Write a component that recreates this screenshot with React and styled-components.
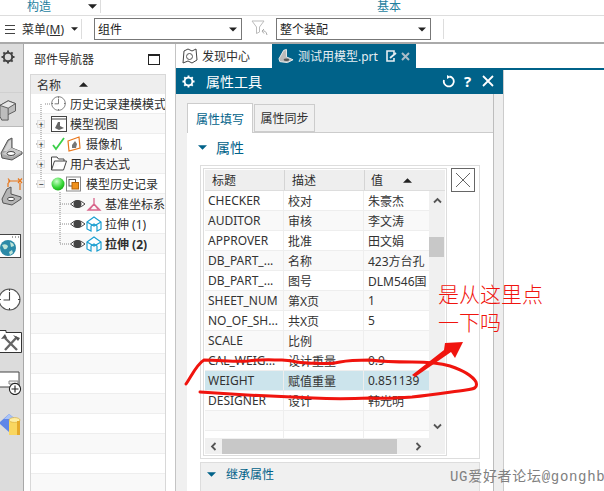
import styled, { createGlobalStyle } from 'styled-components';

const Global = createGlobalStyle`
  html, body { margin: 0; padding: 0; background: #fff; }
  * { box-sizing: border-box; }
`;

const treeRows = [
  { label: '历史记录建模模式', textX: 70 },
  { label: '模型视图', textX: 70, toggle: '+' },
  { label: '摄像机', textX: 86, toggle: '+' },
  { label: '用户表达式', textX: 70, toggle: '+' },
  { label: '模型历史记录', textX: 86, toggle: '−' },
  { label: '基准坐标系', textX: 105 },
  { label: '拉伸 (1)', textX: 105 },
  { label: '拉伸 (2)', textX: 105, bold: true },
];

const attrs = [
  ['CHECKER', '校对', '朱豪杰'],
  ['AUDITOR', '审核', '李文涛'],
  ['APPROVER', '批准', '田文娟'],
  ['DB_PART_...', '名称', '423方台孔'],
  ['DB_PART_...', '图号', 'DLM546国'],
  ['SHEET_NUM', '第X页', '1'],
  ['NO_OF_SH...', '共X页', '5'],
  ['SCALE', '比例', ''],
  ['CAL_WEIG...', '设计重量', '0.9'],
  ['WEIGHT', '赋值重量', '0.851139'],
  ['DESIGNER', '设计', '韩光明'],
  ['', '', ''],
  ['', '', ''],
];

const Caret = ({ up, color = '#222', w = 9, h = 5 }) => (
  <svg width={w} height={h} viewBox="0 0 10 5">
    <path d={up ? 'M0 5 L5 0 L10 5Z' : 'M0 0 L10 0 L5 5Z'} fill={color} />
  </svg>
);

const Chevron = ({ rotate = 0 }) => (
  <svg width="9" height="7" viewBox="0 0 9 7" style={{ transform: `rotate(${rotate}deg)` }}>
    <path d="M1 5.5 L4.5 2 L8 5.5" fill="none" stroke="#555" strokeWidth="1.8" />
  </svg>
);

const Gear = ({ color = '#444', size = 14 }) => (
  <svg width={size} height={size} viewBox="0 0 14 14">
    <circle cx="7" cy="7" r="4.2" fill="none" stroke={color} strokeWidth="2" />
    <path d="M7 0.5V3M7 11V13.5M0.5 7H3M11 7H13.5M2.4 2.4L4 4M10 10L11.6 11.6M2.4 11.6L4 10M10 4L11.6 2.4" stroke={color} strokeWidth="2" />
  </svg>
);

const Cube = () => (
  <svg width="22" height="26" viewBox="0 0 24 26">
    <path d="M1 8 L10 3 L18 6 L18 14 L10 18 L10 24 L3 24 L1 20Z" fill="#bdbdbd" stroke="#555" />
    <path d="M10 3 L18 6 L10 11 L1 8Z" fill="#e8e8e8" stroke="#555" />
    <path d="M10 11V18" stroke="#555" />
  </svg>
);

const Bracket = () => (
  <svg width="23" height="24" viewBox="0 0 23 24">
    <path d="M1 16 L8 3 L12 1 L12 11 L22 15 L22 17 L12 23 L2 21Z" fill="#a8a8a8" stroke="#555" />
    <path d="M3.5 14 L9 4 L11 3 L11 11 L7 14Z" fill="#d6d6d6" />
    <path d="M12 11 L22 15 L12 20 L2 17Z" fill="#c9c9c9" />
    <ellipse cx="11" cy="16.5" rx="4" ry="2" fill="#fff" stroke="#444" />
  </svg>
);

const DimBracket = () => (
  <svg width="23" height="30" viewBox="0 0 23 30">
    <path d="M2 23 L7 13 L11 11 L11 18 L21 21 L21 23 L12 29 L3 27Z" fill="#b4b4b4" stroke="#555" />
    <ellipse cx="11" cy="23" rx="3.5" ry="1.7" fill="#fff" stroke="#444" />
    <path d="M8 5H19M8 2.5L10 5L8 7.5M18 2.5L22 7M22 2.5L18 7M20 7V14M8 7V11" fill="none" stroke="#e8761a" strokeWidth="1.2" />
  </svg>
);

const GlobeWindow = () => (
  <svg width="24" height="26" viewBox="0 0 24 26">
    <rect x="0.5" y="1.5" width="22" height="23" fill="#fff" stroke="#444" />
    <path d="M14 4h1M17 4h1M20 4h1" stroke="#444" />
    <circle cx="10" cy="15" r="8" fill="#2b8aa8" />
    <path d="M4 12 Q8 10 10 13 Q9 17 6 16Z M12 9 Q16 10 16 13 L13 14Z M11 19 L14 17 L15 20 L12 22Z" fill="#bfe4d8" />
  </svg>
);

const Clock = ({ size = 23 }) => (
  <svg width={size} height={size} viewBox="0 0 23 23">
    <circle cx="11.5" cy="11.5" r="10.5" fill="#fff" stroke="#555" strokeWidth="1.1" />
    <path d="M11.5 4V12H5.5M11.5 1V3M11.5 20V22M1 11.5H3M20 11.5H22" fill="none" stroke="#444" strokeWidth="1.1" />
  </svg>
);

const Tools = () => (
  <svg width="23" height="24" viewBox="0 0 23 24">
    <path d="M0.5 1.5H7V3.5H22.5V23.5H0.5Z" fill="#fff" stroke="#333" />
    <path d="M6 9 L18 21 M18 8 L6 21" stroke="#666" strokeWidth="2.4" />
    <path d="M2 10 L6 5 L8 9Z M14 6 L21 9 L19 12Z" fill="#555" />
  </svg>
);

const WindowPlus = () => (
  <svg width="23" height="24" viewBox="0 0 23 24">
    <path d="M0 1H20V16H0" fill="#fff" stroke="#444" />
    <path d="M10 10H19V13H10Z" fill="#eee" stroke="#888" />
    <circle cx="16" cy="18" r="5.6" fill="#fff" stroke="#222" strokeWidth="1.1" />
    <path d="M16 14.5V21.5M12.5 18H19.5" stroke="#222" strokeWidth="1.1" />
  </svg>
);

const DbIcon = () => (
  <svg width="24" height="24" viewBox="0 0 24 24">
    <path d="M1 10 L11 1 L20 8 L11 19Z" fill="#5f87e8" />
    <path d="M6 6 L11 1 L17 6Z" fill="#a9c3f7" />
    <rect x="11" y="7" width="11" height="15" fill="#f9d660" />
    <ellipse cx="16.5" cy="7" rx="5.5" ry="2.4" fill="#fdeea6" stroke="#d5a52e" strokeWidth=".6" />
    <rect x="19" y="8" width="3" height="14" fill="#e5a92b" />
  </svg>
);

const TreeIcon = ({ kind }) => {
  switch (kind) {
    case 0:
      return <Clock size={15} />;
    case 1:
      return (
        <svg width="16" height="16" viewBox="0 0 16 16">
          <rect x=".5" y=".5" width="15" height="15" fill="#fff" stroke="#444" />
          <path d="M1 3H15" stroke="#444" />
          <path d="M4 12 L7 6 L9 6 L9 10 L13 12 L8 14Z" fill="#666" />
        </svg>
      );
    case 2:
      return (
        <svg width="30" height="16" viewBox="0 0 30 16">
          <path d="M2 9 L5 13 L13 2" fill="none" stroke="#3ccf4a" strokeWidth="1.8" />
          <path d="M17 5 L28 1 L29 12 L18 15Z" fill="#fff" stroke="#e8761a" strokeWidth="1.2" />
          <path d="M21 9 L24 5 L26 8 L25 12 L21 12Z" fill="#777" />
        </svg>
      );
    case 3:
      return (
        <svg width="16" height="15" viewBox="0 0 16 15">
          <path d="M.5 14V1H6L7.5 3H13V5M.5 14H12.5L15.5 5H3.5Z" fill="#fff" stroke="#444" />
        </svg>
      );
    case 4:
      return (
        <svg width="30" height="16" viewBox="0 0 30 16">
          <defs>
            <radialGradient id="green" cx=".4" cy=".3" r=".8">
              <stop offset="0" stopColor="#c8ffc8" />
              <stop offset=".6" stopColor="#35d635" />
              <stop offset="1" stopColor="#109a10" />
            </radialGradient>
          </defs>
          <circle cx="7" cy="8" r="6.5" fill="url(#green)" />
          <rect x="15.5" y="1" width="14" height="14" fill="#fff" stroke="#888" />
          <rect x="18" y="3.5" width="6.5" height="6.5" fill="#fff" stroke="#555" />
          <rect x="21" y="6.5" width="6.5" height="6.5" fill="#f0921e" stroke="#b5640c" />
        </svg>
      );
    default:
      return (
        <svg width="32" height="16" viewBox="0 0 32 16">
          <path d="M.5 8 Q7.5 1 15 8 Q7.5 15 .5 8Z" fill="#fff" stroke="#444" />
          <circle cx="7.5" cy="8" r="4" fill="#444" />
          {kind === 5 ? (
            <path d="M24 2V8M24 8L18 14H30ZM24 8L20 13M24 8L28 13" fill="none" stroke="#d9668c" strokeWidth="1.3" />
          ) : (
            <>
              <path d="M17 6 L24 1 L31 6 L31 13 L27 15 L27 10 L24 8 L21 10 L21 15 L17 13Z" fill="#fff" stroke="#1b9fd1" strokeWidth="1.2" />
              <path d="M17 6 L24 10 L31 6" fill="none" stroke="#1b9fd1" strokeWidth="1.2" />
            </>
          )}
        </svg>
      );
  }
};

export default function App() {
  return (
    <>
      <Global />
      <Page>
        <Ribbon>
          <RibbonGroup $width={101} $pad={27}>
            构造
            <RibbonCaret><Caret /></RibbonCaret>
          </RibbonGroup>
          <RibbonGroup $pad={276}>基本</RibbonGroup>
        </Ribbon>

        <Toolbar>
          <MenuButton>
            <MenuLines />
            <span>菜单(<u>M</u>)</span>
            <Caret w={7} h={4} />
          </MenuButton>
          <Separator $left={0} $right={12} />
          <Select $width={148}>
            组件
            <Caret w={8} h={5} />
          </Select>
          <FilterIcon>
            <svg width="17" height="18" viewBox="0 0 17 18">
              <path d="M1 1H13L8.5 7V12L5.5 13.5V7Z" fill="#fff" stroke="#bbb" />
              <path d="M16 15 Q15 10 11 11 M11 11L13 9 M11 11L13 13.5" fill="none" stroke="#aaa" />
            </svg>
          </FilterIcon>
          <Select $width={155}>
            整个装配
            <Caret w={8} h={5} />
          </Select>
          <Separator $left={12} $right={0} />
        </Toolbar>

        <Workspace>
          <Rail>
            <RailItem $h={26} $gap={22} $pad={8}><Gear /></RailItem>
            <RailItem $h={35} $tile $pad={2}><Cube /></RailItem>
            <RailItem $h={43} $active><Bracket /></RailItem>
            <RailItem $h={42} $pad={0}><DimBracket /></RailItem>
            <RailItem $h={67}><GlobeWindow /></RailItem>
            <RailItem $h={40} $pad={2}><Clock /></RailItem>
            <RailItem $h={43}><Tools /></RailItem>
            <RailItem $h={41}><WindowPlus /></RailItem>
            <RailItem $h={44}><DbIcon /></RailItem>
          </Rail>

          <Navigator>
            <NavTitle>
              部件导航器
              <MaximizeBox />
            </NavTitle>
            <Tree>
              <TreeHead>
                名称
                <Caret up w={9} h={5} />
              </TreeHead>
              <TreeLines width="134" height="160">
                <path
                  d="M14 10H20M10 10V90M10 30H5M10 50H5M10 70H5M10 90H5M29 98V150M29 110H39M29 130H39M29 150H39"
                  fill="none"
                  stroke="#888"
                  strokeDasharray="1 1"
                />
              </TreeLines>
              {Array.from({ length: 20 }, (_, i) => {
                const row = treeRows[i];
                return (
                  <TreeRow key={i} $odd={i % 2 === 1}>
                    {row && row.toggle && <Toggle>{row.toggle}</Toggle>}
                    {row && (
                      <RowIcon $left={i >= 5 ? 39 : 20}>
                        <TreeIcon kind={i} />
                      </RowIcon>
                    )}
                    {row && <RowLabel $left={row.textX - 31} $bold={row.bold}>{row.label}</RowLabel>}
                  </TreeRow>
                );
              })}
            </Tree>
          </Navigator>

          <Content>
            <TabStrip>
              <FileTab>
                <svg width="16" height="16" viewBox="0 0 16 16">
                  <path d="M2 3 L6 1 L10 3 L14 1 L15 12 L10 15 L6 13 L1 15Z" fill="#fff" stroke="#444" />
                  <circle cx="7.5" cy="8.5" r="3" fill="none" stroke="#555" />
                </svg>
                发现中心
              </FileTab>
              <FileTab $active>
                <svg width="16" height="16" viewBox="0 0 17 16">
                  <path d="M1 11 L6 2 L9 1 L9 9 L16 12 L10 15 L2 14Z" fill="#bbb" stroke="#eee" />
                  <ellipse cx="9" cy="12" rx="3" ry="1.4" fill="#555" />
                </svg>
                <FileName>测试用模型.prt</FileName>
                <svg width="11" height="12" viewBox="0 0 11 12">
                  <path d="M8 4V1H1V11H8V8" fill="none" stroke="#e8eef2" strokeWidth="1.6" />
                  <path d="M4 8 L10 3" stroke="#e8eef2" strokeWidth="1.8" />
                </svg>
                <svg width="9" height="9" viewBox="0 0 9 9">
                  <path d="M1 1L8 8M8 1L1 8" stroke="#a9bcc8" strokeWidth="2" />
                </svg>
              </FileTab>
            </TabStrip>
            <TealRule />

            <Dialog>
              <TitleBar>
                <Gear color="#fff" size={13} />
                <TitleText>属性工具</TitleText>
                <TitleActions>
                  <svg width="13" height="13" viewBox="0 0 13 13">
                    <path d="M7.5 1.5 A5 5 0 1 1 2 5" fill="none" stroke="#fff" strokeWidth="1.8" />
                    <path d="M5 0 L8.5 2 L5 4Z" fill="#fff" />
                  </svg>
                  <HelpMark>?</HelpMark>
                  <svg width="12" height="12" viewBox="0 0 12 12">
                    <path d="M1 1L11 11M11 1L1 11" stroke="#fff" strokeWidth="1.8" />
                  </svg>
                </TitleActions>
              </TitleBar>

              <DialogBody>
                <DialogMain>
                  <Tabs>
                    <Tab $active>属性填写</Tab>
                    <Tab>属性同步</Tab>
                  </Tabs>
                  <Panel>
                    <SectionHead>
                      <Caret color="#006289" />
                      属性
                    </SectionHead>
                    <GroupBox>
                      <TableBox>
                        <TableHead>
                          <HeadCell>标题</HeadCell>
                          <HeadCell>描述</HeadCell>
                          <HeadCell $last>
                            值
                            <Caret up w={9} h={5} />
                          </HeadCell>
                        </TableHead>
                        <TableMiddle>
                          <TableRows>
                            {attrs.map((r, i) => (
                              <AttrRow key={i} $odd={i % 2 === 1} $selected={r[0] === 'WEIGHT'}>
                                {r.map((c, j) => (
                                  <AttrCell key={j} $col={j}>{c}</AttrCell>
                                ))}
                              </AttrRow>
                            ))}
                          </TableRows>
                          <VScroll>
                            <Chevron />
                            <VThumb />
                            <Chevron rotate={180} />
                          </VScroll>
                        </TableMiddle>
                        <HScroll>
                          <Chevron rotate={270} />
                          <HThumb />
                          <Chevron rotate={90} />
                        </HScroll>
                      </TableBox>
                      <ClearButton>
                        <svg width="18" height="18" viewBox="0 0 18 18">
                          <path d="M2 2L16 16M16 2L2 16" stroke="#666" />
                        </svg>
                      </ClearButton>
                    </GroupBox>
                    <Inherited>
                      <Caret color="#006289" />
                      继承属性
                    </Inherited>
                  </Panel>
                </DialogMain>
                <DialogScroll />
              </DialogBody>
            </Dialog>
          </Content>
        </Workspace>

        <Markup width="604" height="491" viewBox="0 0 604 491">
          <path
            d="M186 384 C192 375 197 364 204 360 C220 360 235 362 248 361 C262 359 272 360 282 360 C295 361 305 364 315 363 C325 364 332 364 340 362 C350 360 360 360 370 360 C385 362 400 362 412 362 C428 362 440 363 450 366 C462 370 472 375 476 382 C478 388 474 389 466 390 C450 392 435 395 412 397 C395 398 385 399 370 398 C350 399 330 399 313 398 C290 397 265 396 247 395 C230 394 215 393 200 392"
            fill="none"
            stroke="#f0140e"
            strokeWidth="3"
            strokeLinecap="round"
          />
          <path d="M412 375 L444 350 L445 343 L463 342 L455 358 L451 352 L415 377Z" fill="#f0140e" />
        </Markup>
        <Note $top={282}>是从这里点</Note>
        <Note $top={310}>一下吗</Note>
        <Watermark>UG爱好者论坛@gonghb</Watermark>
      </Page>
    </>
  );
}

const Page = styled.div`
  position: relative;
  width: 604px;
  height: 491px;
  overflow: hidden;
  display: flex;
  flex-direction: column;
  background: #fff;
  color: #2e2e2e;
  font-family: 'Noto Sans', 'Noto Sans CJK SC', sans-serif;
  font-size: 12px;
  svg {
    flex: none;
  }
`;

const Ribbon = styled.div`
  display: flex;
  height: 16px;
  border-bottom: 1px solid #ddd;
`;

const RibbonGroup = styled.div`
  display: flex;
  align-items: center;
  width: ${({ $width }) => ($width ? `${$width}px` : 'auto')};
  height: 13px;
  padding-left: ${({ $pad }) => $pad}px;
  color: #1f7f9f;
  line-height: 13px;
  ${({ $width }) => $width && 'border-right: 1px solid #ddd;'}
`;

const RibbonCaret = styled.span`
  display: flex;
  margin-left: 37px;
`;

const Toolbar = styled.div`
  display: flex;
  align-items: center;
  height: 28px;
  border-bottom: 2px solid #aaa;
`;

const MenuButton = styled.div`
  display: flex;
  align-items: center;
  padding-left: 5px;
  gap: 7px;
  width: 81px;
  font-size: 12px;
`;

const MenuLines = styled.span`
  width: 10px;
  height: 9px;
  border-top: 1px solid #444;
  border-bottom: 1px solid #444;
  position: relative;
  &::after {
    content: '';
    position: absolute;
    left: 0;
    right: 0;
    top: 3px;
    height: 1px;
    background: #444;
  }
`;

const Separator = styled.span`
  width: 1px;
  height: 20px;
  margin: 0 ${({ $right }) => $right}px 0 ${({ $left }) => $left}px;
  background: #ddd;
`;

const Select = styled.div`
  display: flex;
  align-items: center;
  justify-content: space-between;
  width: ${({ $width }) => $width}px;
  height: 22px;
  padding: 0 4px 0 3px;
  border: 1px solid #777;
  color: #222;
`;

const FilterIcon = styled.span`
  display: flex;
  justify-content: center;
  width: 34px;
`;

const Workspace = styled.div`
  flex: 1;
  display: flex;
  min-height: 0;
`;

const Rail = styled.div`
  width: 24px;
  flex: none;
  background: #dcdcdc;
  border-right: 1px solid #a8a8a8;
`;

const RailItem = styled.div`
  display: flex;
  align-items: center;
  justify-content: flex-end;
  overflow: hidden;
  height: ${({ $h }) => $h}px;
  margin-bottom: ${({ $gap }) => $gap || 0}px;
  padding-right: ${({ $pad, $active }) => ($pad !== undefined ? $pad : $active ? 0 : 1)}px;
  background: ${({ $active }) => ($active ? '#fff' : 'transparent')};
  ${({ $tile }) => $tile && 'border-bottom: 1px solid #bbb; border-top: 1px solid #d0d0d0;'}
`;

const Navigator = styled.div`
  width: 152px;
  flex: none;
  padding: 0 9px 0 6px;
  border-right: 1px solid #c4c4c4;
  background: #fff;
`;

const NavTitle = styled.div`
  display: flex;
  align-items: center;
  justify-content: space-between;
  height: 30px;
  padding: 0 6px 0 4px;
  font-size: 12px;
`;

const MaximizeBox = styled.span`
  width: 12px;
  height: 11px;
  border: 1px solid #222;
  border-top-width: 2px;
`;

const Tree = styled.div`
  position: relative;
  height: 420px;
  border-left: 1px solid #d8d8d8;
  border-right: 1px solid #d8d8d8;
  border-top: 1px solid #d8d8d8;
`;

const TreeHead = styled.div`
  display: flex;
  align-items: center;
  gap: 18px;
  height: 19px;
  padding-left: 6px;
  background: #eee;
  font-size: 12px;
`;

const TreeLines = styled.svg`
  position: absolute;
  left: 0;
  top: 19px;
  z-index: 1;
`;

const TreeRow = styled.div`
  position: relative;
  height: 20px;
  border-bottom: 1px solid #eee;
  background: ${({ $odd }) => ($odd ? '#f9f9f9' : '#fff')};
`;

const Toggle = styled.span`
  position: absolute;
  z-index: 2;
  left: 6px;
  top: 6px;
  width: 8px;
  height: 8px;
  display: flex;
  align-items: center;
  justify-content: center;
  background: #f4f4f4;
  border: 1px solid #e0e0e0;
  color: #111;
  font-size: 9px;
  line-height: 1;
`;

const RowIcon = styled.span`
  position: absolute;
  z-index: 2;
  left: ${({ $left }) => $left}px;
  top: 2px;
  display: flex;
`;

const RowLabel = styled.span`
  position: absolute;
  z-index: 2;
  left: ${({ $left }) => $left}px;
  top: 2px;
  max-width: ${({ $left }) => 134 - $left}px;
  overflow: hidden;
  white-space: nowrap;
  font-size: 12px;
  line-height: 18px;
  font-weight: ${({ $bold }) => ($bold ? 700 : 400)};
`;

const Content = styled.div`
  flex: 1;
  min-width: 0;
  display: flex;
  flex-direction: column;
`;

const TabStrip = styled.div`
  display: flex;
  height: 24px;
`;

const FileTab = styled.div`
  display: flex;
  align-items: center;
  gap: 4px;
  width: ${({ $active }) => ($active ? 144 : 96)}px;
  padding-left: 6px;
  background: ${({ $active }) => ($active ? '#006289' : '#fff')};
  color: ${({ $active }) => ($active ? '#e6eef2' : '#2e2e2e')};
  font-size: 12px;
`;

const FileName = styled.span`
  width: 84px;
  color: #e6eef2;
  white-space: nowrap;
`;

const TealRule = styled.div`
  height: 2px;
  background: #006289;
`;

const Dialog = styled.div`
  flex: 1;
  min-height: 0;
  width: 328px;
  display: flex;
  flex-direction: column;
  border-right: 1px solid #ccc;
  background: #f0f0f0;
`;

const TitleBar = styled.div`
  display: flex;
  align-items: center;
  flex: none;
  height: 24px;
  padding: 0 9px 2px 6px;
  background: #006289;
  color: #fff;
`;

const TitleText = styled.span`
  margin-left: 11px;
  font-size: 14px;
`;

const TitleActions = styled.div`
  display: flex;
  align-items: center;
  gap: 9px;
  margin-left: auto;
`;

const HelpMark = styled.span`
  width: 9px;
  font-size: 15px;
  font-weight: 700;
  line-height: 15px;
`;

const DialogBody = styled.div`
  flex: 1;
  min-height: 0;
  display: flex;
`;

const DialogMain = styled.div`
  flex: 1;
  min-width: 0;
  padding: 9px 0 0 11px;
  display: flex;
  flex-direction: column;
`;

const DialogScroll = styled.div`
  width: 10px;
  flex: none;
  background: #eee;
  border-left: 1px solid #bdbdbd;
`;

const Tabs = styled.div`
  display: flex;
  align-items: flex-end;
  gap: 1px;
  height: 29px;
  flex: none;
`;

const Tab = styled.div`
  display: flex;
  align-items: center;
  justify-content: center;
  width: ${({ $active }) => ($active ? 66 : 61)}px;
  height: ${({ $active }) => ($active ? 30 : 28)}px;
  margin-bottom: ${({ $active }) => ($active ? -1 : 0)}px;
  position: relative;
  z-index: 1;
  border: 1px solid #ccc;
  border-bottom: ${({ $active }) => ($active ? '0' : '1px solid #ccc')};
  background: ${({ $active }) => ($active ? '#fff' : '#f0f0f0')};
  color: ${({ $active }) => ($active ? '#006289' : '#2e2e2e')};
`;

const Panel = styled.div`
  flex: 1;
  min-height: 0;
  padding: 0 13px;
  border-top: 1px solid #ccc;
  background: #fff;
`;

const SectionHead = styled.div`
  display: flex;
  align-items: center;
  gap: 9px;
  height: 32px;
  padding-bottom: 4px;
  margin-left: -2px;
  color: #006289;
  font-size: 14px;
`;

const GroupBox = styled.div`
  display: flex;
  gap: 4px;
  width: 280px;
  height: 294px;
  padding: 2px;
  border: 1px solid #ddd;
`;

const TableBox = styled.div`
  width: 244px;
  height: 288px;
  flex: none;
  padding: 1px;
  border: 1px solid #ddd;
  display: flex;
  flex-direction: column;
`;

const TableHead = styled.div`
  display: grid;
  grid-template-columns: 80px 80px 80px;
  height: 21px;
  flex: none;
  background: #eee;
  border-bottom: 1px solid #ddd;
`;

const HeadCell = styled.div`
  display: flex;
  align-items: center;
  gap: 20px;
  padding-left: ${({ $last }) => ($last ? 6 : 7)}px;
  border-right: ${({ $last }) => ($last ? '0' : '1px solid #d4d4d4')};
`;

const TableMiddle = styled.div`
  flex: 1;
  min-height: 0;
  display: flex;
`;

const TableRows = styled.div`
  flex: 1;
  overflow: hidden;
  background: #fff;
`;

const AttrRow = styled.div`
  display: grid;
  grid-template-columns: 79px 80px 65px;
  height: 20px;
  border-bottom: 1px solid #eee;
  background: ${({ $selected, $odd }) => ($selected ? '#cce4ec' : $odd ? '#f9f9f9' : '#fff')};
`;

const AttrCell = styled.div`
  display: flex;
  align-items: center;
  overflow: hidden;
  white-space: nowrap;
  padding-left: ${({ $col }) => ($col === 0 ? 3 : 4)}px;
  border-right: ${({ $col }) => ($col === 2 ? '0' : '1px solid #eee')};
  color: #333;
`;

const VScroll = styled.div`
  width: 16px;
  flex: none;
  display: flex;
  flex-direction: column;
  align-items: center;
  padding: 6px 0 8px;
  background: #f0f0f0;
  position: relative;
  svg:last-child {
    margin-top: auto;
  }
`;

const VThumb = styled.div`
  position: absolute;
  left: 0;
  top: 46px;
  width: 15px;
  height: 20px;
  background: #c8c8c8;
`;

const HScroll = styled.div`
  display: flex;
  align-items: center;
  justify-content: space-between;
  height: 16px;
  flex: none;
  padding: 0 22px 0 4px;
  background: #f0f0f0;
`;

const HThumb = styled.div`
  width: 175px;
  height: 15px;
  margin-left: 4px;
  margin-right: auto;
  background: #c8c8c8;
`;

const ClearButton = styled.div`
  width: 24px;
  height: 24px;
  flex: none;
  display: flex;
  align-items: center;
  justify-content: center;
  border: 1px solid #666;
  background: #fff;
`;

const Inherited = styled.div`
  display: flex;
  align-items: center;
  gap: 10px;
  width: 280px;
  height: 30px;
  margin-top: 3px;
  padding: 0 0 6px 6px;
  border: 1px solid #ddd;
  background: #f0f0f0;
  color: #006289;
`;

const Markup = styled.svg`
  position: absolute;
  left: 0;
  top: 0;
  z-index: 5;
  pointer-events: none;
`;

const Note = styled.div`
  position: absolute;
  z-index: 6;
  left: 438px;
  top: ${({ $top }) => $top}px;
  color: #f0140e;
  font-size: 21px;
  font-weight: 300;
  line-height: 24px;
  white-space: nowrap;
`;

const Watermark = styled.div`
  position: absolute;
  z-index: 6;
  left: 450px;
  top: 469px;
  color: #808080;
  font-family: 'Liberation Mono', 'Noto Sans CJK SC', monospace;
  font-size: 14px;
  line-height: 16px;
  letter-spacing: 0.7px;
  white-space: nowrap;
`;
